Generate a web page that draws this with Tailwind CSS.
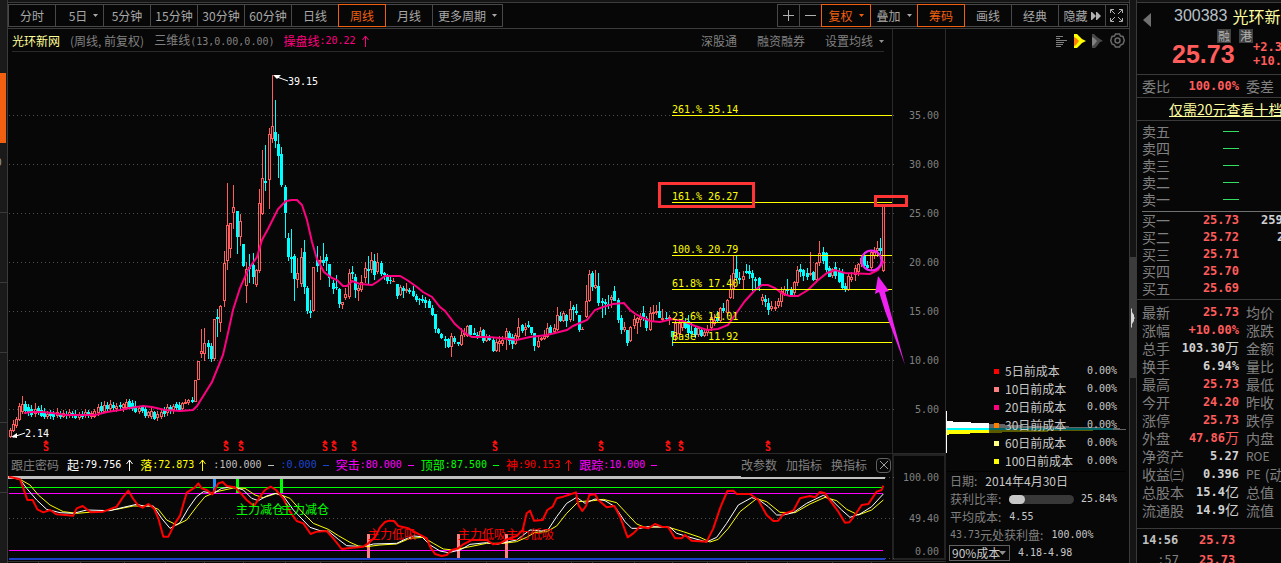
<!DOCTYPE html>
<html lang="zh-CN">
<head>
<meta charset="utf-8">
<title>光环新网 300383</title>
<script src="https://cdn.jsdelivr.net/npm/@tailwindcss/browser@4"></script>
</head>
<body class="flex h-screen overflow-hidden bg-[#070707] font-['Noto_Sans_CJK_SC',sans-serif] text-xs leading-[18px] text-[#a8a8a8]">

<aside class="flex w-2 shrink-0 flex-col border-r border-[#3a3a3a] bg-[#1a1a1a]">
  <div class="h-[73px] shrink-0"></div>
  <div class="h-[70px] w-[6px] shrink-0 bg-[#f06010]"></div>
  <div class="h-[70px] shrink-0 overflow-hidden border-b border-[#3a3a3a] pt-[10px] text-[10px]"><span class="-ml-1">0</span></div>
  <div class="h-[70px] shrink-0 border-b border-[#3a3a3a]"></div>
  <div class="h-[70px] shrink-0 border-b border-[#3a3a3a]"></div>
  <div class="h-[70px] shrink-0 border-b border-[#3a3a3a]"></div>
  <div class="h-[70px] shrink-0 border-b border-[#3a3a3a]"></div>
</aside>

<main class="flex min-w-0 flex-1 flex-col">
  <div class="h-[3px] shrink-0 border-b border-[#3c3c3c] bg-[#151515]"></div>
  <nav class="flex h-[26px] shrink-0 items-center justify-between border-b border-[#3c3c3c]">
    <div class="flex h-[23px] whitespace-nowrap">
      <button class="w-[48px] border border-[#484848]">分时</button>
      <button class="-ml-px flex w-[49px] items-center justify-center gap-[6px] border border-[#484848] pl-2">5日<svg width="5" height="3"><path d="M0 0h5L2.500 3z" fill="#a8a8a8"/></svg></button>
      <button class="-ml-px w-[48px] border border-[#484848]">5分钟</button>
      <button class="-ml-px w-[48px] border border-[#484848]">15分钟</button>
      <button class="-ml-px w-[48px] border border-[#484848]">30分钟</button>
      <button class="-ml-px w-[48px] border border-[#484848]">60分钟</button>
      <button class="-ml-px w-[48px] border border-[#484848]">日线</button>
      <button class="relative z-10 -ml-px w-[48px] border border-[#f06010] text-[#f06010]">周线</button>
      <button class="-ml-px w-[48px] border border-[#484848]">月线</button>
      <button class="-ml-px flex w-[71px] items-center justify-center gap-[6px] border border-[#484848]">更多周期<svg width="5" height="3"><path d="M0 0h5L2.500 3z" fill="#a8a8a8"/></svg></button>
    </div>
    <div class="mr-px flex h-[23px] whitespace-nowrap">
      <button aria-label="放大" class="flex w-[23px] items-center justify-center border border-[#484848]"><svg width="11" height="11" stroke="#b0b0b0"><path d="M0 5.500h11M5.500 0v11"/></svg></button>
      <button aria-label="缩小" class="-ml-px flex w-[23px] items-center justify-center border border-[#484848]"><svg width="11" height="11" stroke="#b0b0b0"><path d="M0 5.500h11"/></svg></button>
      <button class="relative z-10 -ml-px flex w-[50px] items-center justify-center gap-[6px] border border-[#f06010] text-[#f06010]">复权<svg width="5" height="3"><path d="M0 0h5L2.500 3z" fill="#f06010"/></svg></button>
      <button class="-ml-px flex w-[48px] items-center justify-center gap-[6px] border border-[#484848]">叠加<svg width="5" height="3"><path d="M0 0h5L2.500 3z" fill="#a8a8a8"/></svg></button>
      <button class="relative z-10 -ml-px w-[48px] border border-[#f06010] text-[#f06010]">筹码</button>
      <button class="-ml-px w-[48px] border border-[#484848]">画线</button>
      <button class="-ml-px w-[48px] border border-[#484848]">经典</button>
      <button class="-ml-px flex w-[48px] items-center justify-center gap-[3px] border border-[#484848]">隐藏<svg width="10" height="8" fill="#b0b0b0"><path d="M0 0h1l4 4-4 4H0zM5 0h1l4 4-4 4H5z"/></svg></button>
      <button aria-label="全屏" class="-ml-px flex w-[23px] items-center justify-center border border-[#484848]"><svg width="13" height="13" fill="none" stroke="#b0b0b0"><path d="M.5 4V.5H4M9 .5h3.500V4M12.500 9v3.500H9M4 12.500H.5V9M1 1l4 4M12 1L8 5M12 12L8 8M1 12l4-4"/></svg></button>
    </div>
  </nav>

  <div class="flex min-h-0 flex-1">
    <section class="flex min-w-0 flex-1 flex-col">
      <header class="flex h-[23px] shrink-0 whitespace-nowrap text-[#808080]">
        <div class="mr-[8px] ml-[4px] flex min-w-0 flex-1 items-center border-b border-[#2a2a2a] pt-[2px]">
          <h1 class="text-[#ffff99]">光环新网</h1>
          <span class="ml-[10px]">(周线, 前复权)</span>
          <span class="ml-[10px]">三维线<span class="font-['DejaVu_Sans_Mono',monospace] text-[10px]">(13,0.00,0.00)</span></span>
          <span class="ml-[9px] flex items-center text-[#ff0080]">操盘线<span class="mr-[6px] font-['DejaVu_Sans_Mono',monospace] text-[10px]">:20.22</span><svg width="8" height="12" fill="none" stroke="currentColor"><path d="M3.500 12V1M.5 5l3-4 3 4"/></svg></span>
          <div class="ml-auto flex gap-[20px]"><button>深股通</button><button>融资融券</button><button class="flex items-center gap-[6px]">设置均线<svg width="5" height="3"><path d="M0 0h5L2.500 3z" fill="#909090"/></svg></button></div>
        </div>
        <div class="w-[54px] shrink-0 border-x border-[#2a2a2a]"></div>
      </header>

      <svg class="block min-h-0 w-full flex-1 overflow-visible" viewBox="8 52 938 401" preserveAspectRatio="xMinYMin meet" font-family="'DejaVu Sans Mono',monospace" font-size="10" role="img" aria-label="周线图">
        <path d="M892.500 52V453M945.500 52V453" stroke="#2a2a2a"/>
        <path d="M9 115.500H894M9 164.500H894M9 213.500H894M9 262.500H894M9 311.500H894M9 360.500H894M9 409.500H894" stroke="#505050" stroke-dasharray="1 3"/>
        <g fill="#808080"><text x="909" y="119">35.00</text><text x="909" y="168">30.00</text><text x="909" y="217">25.00</text><text x="909" y="266">20.00</text><text x="909" y="315">15.00</text><text x="909" y="364">10.00</text><text x="915" y="413">5.00</text></g>
        <g id="candles" shape-rendering="crispEdges"></g>
        <polyline fill="none" stroke="#ff0080" stroke-width="2" points="24,413 32,412 42,412 52,413 66,415 80,415 95,415 107,412 120,410 130,408 143,406 152,407 165,410 180,411 193,410 197,406 202,398 212,382 223,355 228,333 233,310 240,288 248,270 257,257 262,240 268,229 278,209 286,201 292,200 297,200 302,205 307,220 312,242 317,259 324,272 332,278 337,280 343,286 347,286 352,281 360,284 372,285 377,282 385,276 400,276 407,280 417,287 423,292 432,297 440,307 445,311 455,324 465,333 472,337 488,337 500,338 517,340 530,337 547,335 567,330 573,326 587,320 595,310 603,307 613,304 624,303 630,310 637,315 650,321 660,322 672,319 683,321 695,326 707,330 718,329 728,325 735,315 745,301 755,290 762,285 768,285 775,288 783,294 790,296 798,296 808,290 817,281 827,273 835,270 845,273 870,274 878,270 884,261"/>
        <path d="M672 115.500H892M672 202.500H892M672 255.500H892M672 289.500H892M672 322.500H892M672 342.500H892" stroke="#ff0"/>
        <g fill="#ff0" style="white-space:pre"><text x="672" y="113">261.% 35.14</text><text x="672" y="200">161.% 26.27</text><text x="672" y="253">100.% 20.79</text><text x="672" y="287">61.8% 17.40</text><text x="672" y="320">23.6% 14.01</text><text x="672" y="340" xml:space="preserve">Base&#160; 11.92</text></g>
        <g fill="#fff"><path d="M273 75h8l-4 4z"/><path d="M277 77l11 4" stroke="#fff"/><text x="288" y="85">39.15</text>
        <path d="M11 437l6-4v5z"/><path d="M13 437l12-4" stroke="#fff"/><text x="25" y="437">2.14</text></g>
        <g fill="none" stroke="#ff3535" stroke-width="3"><rect x="659.500" y="183.500" width="94" height="23"/><rect x="875.500" y="196.500" width="31" height="9"/></g>
        <circle cx="871.500" cy="260.500" r="10" fill="none" stroke="#f020f0" stroke-width="2"/>
        <path d="M878 276l11 15-4 1 20 73-20-54-6-19-4 2z" fill="#f020f0"/>
        <g id="marks" fill="#ff1010" font-weight="bold" text-anchor="middle"></g>
      </svg>

      <header class="flex h-[23px] shrink-0 whitespace-nowrap border-t border-[#2a2a2a]">
        <div class="flex min-w-0 flex-1 items-center pl-[3px]">
          <span class="mr-[8px] text-[#808080]">跟庄密码</span>
          <div class="flex gap-[6px]">
            <span class="flex items-center text-white">起<span class="mr-[5px] font-['DejaVu_Sans_Mono',monospace] text-[10px]">:79.756</span><svg width="8" height="12" fill="none" stroke="currentColor"><path d="M3.500 12V1M.5 5l3-4 3 4"/></svg></span>
            <span class="flex items-center text-[#ffff00]">落<span class="mr-[5px] font-['DejaVu_Sans_Mono',monospace] text-[10px]">:72.873</span><svg width="8" height="12" fill="none" stroke="currentColor"><path d="M3.500 12V1M.5 5l3-4 3 4"/></svg></span>
            <span class="flex items-center text-[#c0c0c0]"><span class="mr-[5px] font-['DejaVu_Sans_Mono',monospace] text-[10px]">:100.000</span><svg width="8" height="12" stroke="currentColor"><path d="M1 6.500h6"/></svg></span>
            <span class="flex items-center text-[#1a45d0]"><span class="mr-[5px] font-['DejaVu_Sans_Mono',monospace] text-[10px]">:0.000</span><svg width="8" height="12" stroke="currentColor"><path d="M1 6.500h6"/></svg></span>
            <span class="flex items-center text-[#ff00ff]">突击<span class="mr-[5px] font-['DejaVu_Sans_Mono',monospace] text-[10px]">:80.000</span><svg width="8" height="12" stroke="currentColor"><path d="M1 6.500h6"/></svg></span>
            <span class="flex items-center text-[#00ff00]">顶部<span class="mr-[5px] font-['DejaVu_Sans_Mono',monospace] text-[10px]">:87.500</span><svg width="8" height="12" stroke="currentColor"><path d="M1 6.500h6"/></svg></span>
            <span class="flex items-center text-[#ff0000]">神<span class="mr-[5px] font-['DejaVu_Sans_Mono',monospace] text-[10px]">:90.153</span><svg width="8" height="12" fill="none" stroke="currentColor"><path d="M3.500 12V1M.5 5l3-4 3 4"/></svg></span>
            <span class="flex items-center text-[#ff00ff]">跟踪<span class="mr-[5px] font-['DejaVu_Sans_Mono',monospace] text-[10px]">:10.000</span><svg width="8" height="12" stroke="currentColor"><path d="M1 6.500h6"/></svg></span>
          </div>
          <div class="mr-px ml-auto flex items-center gap-[9px] text-[#808080]"><button>改参数</button><button>加指标</button><button>换指标</button><button aria-label="关闭" class="flex h-[15px] w-[15px] items-center justify-center rounded-sm border border-[#606060]"><svg width="8" height="8" stroke="#a0a0a0"><path d="M0 0l8 8M8 0L0 8"/></svg></button></div>
        </div>
        <div class="w-[54px] shrink-0 border-x-2 border-t-2 border-[#222]"></div>
      </header>

      <svg class="block h-[87px] w-full shrink-0 overflow-visible" viewBox="8 476 938 87" preserveAspectRatio="xMinYMin meet" role="img" aria-label="跟庄密码指标">
        <path d="M893 476V559H945V476" fill="none" stroke="#222" stroke-width="2"/>
        <path d="M8 561.500H946M38.500 561v2M80.500 561v2M124.500 561v2M165.500 561v2M204.500 561v2M243.500 561v2M285.500 561v2M320.500 561v2M361.500 561v2M406.500 561v2M445.500 561v2M486.500 561v2M528.500 561v2M571.500 561v2M592.500 561v2M634.500 561v2M672.500 561v2M707.500 561v2M746.500 561v2M787.500 561v2M832.500 561v2M871.500 561v2" stroke="#333"/>
        <path d="M9 518.500H894M885 477.500H894M885 558.500H894" stroke="#505050" stroke-dasharray="1 3"/>
        <path d="M8 476H741V477H885V479H8z" fill="#c0c0c0"/>
        <path d="M9 487.500H883" stroke="#0f0"/>
        <path d="M9 493.500H883M9 550.500H883" stroke="#f0f"/>
        <path d="M9 559H885" stroke="#1a40c8" stroke-width="2"/>
        <path d="M213 479h3v14h-3z" fill="#2090ff"/>
        <path d="M236 479h3v14h-3zM280 479h3v14h-3z" fill="#0f0"/>
        <path d="M367 534h3v24h-3zM457 534h3v24h-3zM505 534h3v24h-3z" fill="#ff8080"/>
        <g fill="none" stroke="#ff0" stroke-width="3">
          <polyline transform="translate(0 450) scale(.33333)" points="27,80 60,88 90,105 115,135 150,165 190,185 230,190 290,185 350,178 400,168 450,168 475,178 500,210 530,225 560,210 590,170 615,140 650,125 700,114 735,115 765,135 790,143 830,130 870,145 910,190 940,220 985,238 1015,257 1050,277 1075,288 1100,290 1140,285 1190,282 1230,265 1270,262 1300,280 1330,297 1360,300 1410,290 1460,280 1510,280 1550,275 1580,262 1605,247 1640,245 1670,228 1700,190 1735,155 1780,152 1810,148 1850,158 1880,190 1910,222 1935,232 2000,230 2050,245 2100,262 2130,276 2155,268 2185,235 2220,185 2270,146 2300,155 2340,187 2385,188 2430,162 2475,142 2510,152 2540,178 2575,195 2615,180 2650,150"/>
        </g>
        <g fill="none" stroke="#fff" stroke-width="3">
          <polyline transform="translate(0 450) scale(.33333)" points="27,82 60,88 80,115 110,150 140,178 180,188 220,190 260,180 330,182 370,172 410,163 430,168 460,168 485,205 510,235 540,218 565,175 590,140 610,125 640,130 665,115 700,110 730,120 755,145 775,152 800,138 825,130 850,138 880,180 930,232 960,242 985,243 1015,268 1040,287 1090,290 1120,282 1190,280 1215,268 1240,258 1265,260 1290,285 1320,303 1345,308 1380,300 1410,283 1460,278 1490,283 1550,270 1590,240 1625,243 1645,238 1670,200 1700,160 1730,142 1755,160 1785,147 1815,152 1845,170 1875,215 1895,235 1920,235 1945,230 2010,232 2030,250 2070,262 2120,276 2150,262 2180,220 2215,165 2255,143 2275,148 2305,170 2330,195 2350,195 2380,188 2420,160 2470,136 2495,150 2525,180 2550,202 2580,192 2615,170 2650,132"/>
        </g>
        <g fill="none" stroke="#f00" stroke-width="6" stroke-linejoin="round">
          <polyline transform="translate(0 450) scale(.33333)" points="27,80 60,88 70,115 82,150 98,150 112,178 130,187 150,180 170,193 220,197 230,175 248,168 272,187 310,185 350,170 368,143 385,122 400,147 415,167 428,173 445,162 462,175 475,205 490,260 505,260 525,220 540,197 560,128 585,112 595,100 605,115 620,120 637,133 655,100 668,96 680,108 705,112 720,127 740,150 762,168 780,140 795,120 812,110 828,120 850,145 870,185 890,213 910,220 932,252 950,245 980,243 1000,265 1025,297 1050,294 1090,290 1105,280 1125,262 1140,232 1155,216 1168,212 1182,213 1195,228 1225,235 1252,250 1280,265 1290,290 1305,312 1325,318 1340,315 1355,300 1375,295 1390,283 1415,270 1460,270 1480,283 1500,280 1520,268 1550,258 1568,240 1580,190 1590,182 1602,212 1628,210 1642,180 1658,170 1670,145 1690,140 1705,135 1728,127 1735,165 1747,183 1758,168 1768,135 1785,133 1795,150 1820,172 1843,168 1860,200 1883,262 1900,250 1920,230 1945,235 1965,222 1985,230 2005,232 2025,265 2045,265 2055,255 2075,272 2120,275 2140,235 2160,175 2182,123 2200,122 2210,132 2250,132 2275,150 2300,195 2320,213 2335,212 2350,192 2380,182 2400,145 2430,138 2445,142 2460,126 2475,130 2495,158 2515,185 2535,218 2548,217 2565,195 2585,165 2605,162 2630,125 2645,120 2650,107"/>
        </g>
        <g font-size="12" font-family="'Noto Sans CJK SC',sans-serif"><g fill="#0f0"><text x="236" y="514">主力减仓</text><text x="281" y="514">主力减仓</text></g><g fill="#f00"><text x="368" y="539">主力低吸</text><text x="458" y="539">主力低吸</text><text x="506" y="539">主力低吸</text></g></g>
        <g fill="#808080" font-family="'DejaVu Sans Mono',monospace" font-size="10"><text x="903" y="481">100.00</text><text x="909" y="522">49.40</text><text x="915" y="555">0.00</text></g>
      </svg>
    </section>

    <section class="relative flex w-[183px] shrink-0 flex-col whitespace-nowrap text-[#c8c8c8]">
      <div class="flex h-[23px] shrink-0 items-center justify-end gap-[5px] pr-[4px]">
        <button aria-label="列表"><svg width="13" height="12" stroke="#808080"><path d="M0 1.500h7M0 3.500h4M0 5.500h11M0 7.500h8M0 9.500h7M0 11.500h5"/></svg></button>
        <button aria-label="当前筹码"><svg width="13" height="14"><path d="M0 0h3l3 3 2 2 4 2-4 2-3 3-2 2H0z" fill="#ff0"/><path d="M0 3l2 1 3 3-3 4-2 1z" fill="#ff8000"/></svg></button>
        <button aria-label="历史筹码"><svg width="13" height="14"><path d="M0 0h2l3 3 3 2 3 2-3 1-3 4-2 2H0z" fill="#484848"/><path d="M0 3l2 1 3 3-3 4-2 1z" fill="#808080"/></svg></button>
        <button aria-label="设置"><svg width="15" height="15" fill="none" stroke="#686868" stroke-width="1.500"><path d="M5.500 1h4l1 2 2.500.5L14.300 7.500 13 11l-2.500 1-1 2h-4l-1-2L2 11 .7 7.500 2 3.500 4.500 3z"/><circle cx="7.500" cy="7.500" r="2.500"/></svg></button>
      </div>
      <svg class="absolute top-[382px] left-0" width="180" height="42" viewBox="946 411 180 42" shape-rendering="crispEdges">
        <path d="M989 424H1005V425H1023V426H1069V427H1100V428H1120V429H1126V430H989z" fill="#666"/>
        <path d="M989 430H1093V431H1048V432H1002V433H989z" fill="#5a5a00"/>
        <path d="M989 428H1113V430H989z" fill="#006868"/>
        <path d="M946 411h1V421H953V422H971V423H989V430H947V453H946z" fill="#fff"/>
        <path d="M947 430H989V433H970V434H949V435H947z" fill="#ff0"/>
        <path d="M947 428H989V430H947z" fill="#0ff"/>
      </svg>
      <ul class="relative mt-auto pr-[12px] pl-[48px]">
        <li class="flex h-[18px] items-center"><i class="mr-[6px] h-[5px] w-[5px] bg-[#ff0000]"></i>5日前成本<span class="ml-auto font-['DejaVu_Sans_Mono',monospace] text-[10px]">0.00%</span></li>
        <li class="flex h-[18px] items-center"><i class="mr-[6px] h-[5px] w-[5px] bg-[#ff8080]"></i>10日前成本<span class="ml-auto font-['DejaVu_Sans_Mono',monospace] text-[10px]">0.00%</span></li>
        <li class="flex h-[18px] items-center"><i class="mr-[6px] h-[5px] w-[5px] bg-[#ff0080]"></i>20日前成本<span class="ml-auto font-['DejaVu_Sans_Mono',monospace] text-[10px]">0.00%</span></li>
        <li class="flex h-[18px] items-center"><i class="mr-[6px] h-[5px] w-[5px] bg-[#ff8000]"></i>30日前成本<span class="ml-auto font-['DejaVu_Sans_Mono',monospace] text-[10px]">0.00%</span></li>
        <li class="flex h-[18px] items-center"><i class="mr-[6px] h-[5px] w-[5px] bg-[#ffff80]"></i>60日前成本<span class="ml-auto font-['DejaVu_Sans_Mono',monospace] text-[10px]">0.00%</span></li>
        <li class="flex h-[18px] items-center"><i class="mr-[6px] h-[5px] w-[5px] bg-[#ffff00]"></i>100日前成本<span class="ml-auto font-['DejaVu_Sans_Mono',monospace] text-[10px]">0.00%</span></li>
      </ul>
      <div class="mt-px mr-[3px] border-t border-black pr-[9px] pb-px pl-[4px]">
        <p class="flex h-[18px] items-center"><span class="mr-[8px] text-[#808080]">日期:</span>2014年4月30日</p>
        <p class="flex h-[18px] items-center"><span class="mr-[8px] text-[#808080]">获利比率:</span><span class="h-[9px] w-[65px] rounded-full bg-[#383838]"><span class="block h-[9px] w-[16px] rounded-full bg-[#c8c8c8]"></span></span><span class="ml-auto font-['DejaVu_Sans_Mono',monospace] text-[10px]">25.84%</span></p>
        <p class="flex h-[18px] items-center"><span class="mr-[8px] text-[#808080]">平均成本:</span><span class="font-['DejaVu_Sans_Mono',monospace] text-[10px]">4.55</span></p>
        <p class="flex h-[18px] items-center"><span class="text-[#808080] font-['DejaVu_Sans_Mono',monospace] text-[10px]">43.73</span><span class="mr-[8px] text-[#808080]">元处获利盘:</span><span class="font-['DejaVu_Sans_Mono',monospace] text-[10px]">100.00%</span></p>
        <p class="flex h-[18px] items-center"><span class="relative mr-[8px] -ml-px flex items-center"><select aria-label="成本区间" class="h-4 w-[61px] appearance-none border border-[#606060] bg-[#070707] pl-[2px] text-xs leading-[14px]"><option>90%成本</option><option>70%成本</option></select><svg class="pointer-events-none absolute right-1" width="7" height="4"><path d="M0 0h7L3.500 4z" fill="#909090"/></svg></span><span class="font-['DejaVu_Sans_Mono',monospace] text-[10px]">4.18-4.98</span></p>
      </div>
    </section>
  </div>
</main>

<div class="flex w-[8px] shrink-0 flex-col border-x border-[#3a3a3a] bg-[#151515]">
  <div class="h-[257px] shrink-0"></div>
  <div class="flex h-[121px] shrink-0 items-center justify-center bg-[#3c3c3c]"><svg width="5" height="20"><path d="M0 0l1 1v3l2 3v2l1 1-1 1v2l-2 3v3l-1 1z" fill="#d8d8d8"/></svg></div>
</div>

<aside class="w-[144px] shrink-0 overflow-hidden whitespace-nowrap text-sm text-[#808080]">
  <div class="h-[3px] border-b border-[#3c3c3c] bg-[#151515]"></div>
  <div class="flex h-[25px] items-center">
    <button aria-label="上一只" class="mr-[23px] ml-[6px] pt-[8px]"><svg width="8" height="14"><path d="M8 0v14L0 7z" fill="#707070"/></svg></button>
    <span class="mr-[5px] font-['Liberation_Sans',sans-serif] text-base text-[#b8c0c8]">300383</span><span class="text-base text-[#ffffa0]">光环新网</span>
  </div>
  <div class="flex h-[47px] border-b border-[#3a3a3a]">
    <div class="ml-[35px] w-[64px] shrink-0">
      <div class="-mr-[17px] flex justify-end gap-2 pt-px text-xs leading-[14px] text-[#b0b0b0]"><span class="w-[14px] bg-[#404040] text-center">融</span><span class="w-[14px] bg-[#404040] text-center">港</span></div>
      <div class="font-['Liberation_Sans',sans-serif] text-[25px] leading-[22px] font-bold text-[#ff5c5c]">25.73</div>
    </div>
    <div class="ml-[17px] pt-[12px] font-['DejaVu_Sans_Mono',monospace] text-xs leading-[14px] font-bold text-[#ff5c5c]"><div>+2.34</div><div>+10.00%</div></div>
  </div>
  <div class="grid h-[23px] grid-cols-[97px_60px] items-center gap-x-[7px] border-b border-[#3a3a3a] pl-[5px] leading-[18px]"><div class="flex items-center justify-between">委比<b class="font-['DejaVu_Sans_Mono',monospace] text-xs leading-[18px] text-[#ff5c5c]">100.00%</b></div>委差</div>
  <div class="h-[23px] border-b border-[#3a3a3a] pl-[32px] leading-[22px]"><a href="#level2" class="text-[#ffffa0] underline">仅需20元查看十档行情</a></div>
  <div class="ml-[5px] border-b border-[#707070] pt-[2px] pb-[3px] leading-[17px]" id="asks"></div>
  <div class="pl-[5px] leading-[17px]" id="bids"></div>
  <div class="mt-[2px] border-t border-[#3a3a3a] pt-[3px] pb-[9px] pl-[5px] leading-[18px]" id="stats"></div>
  <div class="border-t border-[#3a3a3a] pt-px pl-[5px] font-['DejaVu_Sans_Mono',monospace] text-xs leading-5 font-bold">
    <div class="flex gap-[20px]"><span class="w-[37px] text-[#c0c0c0]">14:56</span><span class="text-[#ff5c5c]">25.73</span></div>
    <div class="flex gap-[20px]"><span class="w-[37px] text-right font-normal">:57</span><span class="text-[#ff5c5c]">25.73</span></div>
  </div>
</aside>

<script>
// Weekly bars: centre x, high, low, body top, body bottom, 1 = rising / 0 = falling
const bars = `10 428 437 430 436 1|13 420 431 424 430 1|16 417 427 419 425 1|19 403 420 406 419 1|22 396 413 404 411 1|25 401 413 404 410 0|28 404 415 407 412 0|31 405 416 409 414 0|35 403 416 409 413 1|38 406 414 408 412 0|41 405 416 410 415 0|44 408 418 413 416 0|47 411 418 414 416 1|50 410 418 413 415 0|53 411 419 413 416 0|57 408 417 412 415 1|60 411 418 414 416 0|63 410 417 413 416 1|66 411 418 414 415 0|69 409 417 412 415 1|72 411 417 413 414 0|75 410 418 414 417 0|79 412 419 415 417 1|82 411 418 414 416 0|85 409 417 412 415 1|88 410 417 412 415 0|91 411 418 413 416 1|94 409 417 411 416 1|98 404 415 407 412 1|101 402 412 406 410 0|104 401 412 405 411 1|107 402 411 405 408 0|110 400 410 404 408 1|113 402 410 405 407 0|116 403 411 406 408 1|120 402 410 405 406 0|123 403 411 404 407 1|126 399 409 402 407 1|129 399 408 401 406 0|132 400 410 403 408 0|135 401 412 406 411 0|139 406 413 408 411 1|142 405 412 407 410 0|145 407 417 409 415 0|148 411 417 412 415 1|151 408 418 411 416 1|154 411 419 412 418 0|157 411 420 414 417 1|161 409 418 412 416 1|164 407 416 410 413 0|167 404 415 407 412 1|170 405 413 407 410 0|173 404 413 406 409 1|176 402 410 404 407 0|179 402 411 405 409 0|182 402 409 403 408 1|185 399 403 402 403 1|188 399 404 400 402 1|192 397 402 400 401 0|195 380 401 380 401 1|198 361 379 361 379 1|201 329 357 351 353 1|204 328 360 343 353 1|208 340 358 343 346 0|211 343 361 346 358 0|214 319 360 319 358 1|217 309 336 317 318 0|220 305 331 306 322 1|224 251 306 263 300 1|227 183 269 225 260 1|230 223 257 223 248 1|233 185 228 207 212 1|237 211 253 211 236 0|240 214 245 221 236 1|243 244 266 244 265 0|246 262 302 269 285 1|249 254 282 267 268 0|253 253 283 265 276 0|256 269 286 270 284 1|259 189 272 203 270 1|262 150 214 178 213 1|265 145 190 181 182 0|269 128 208 134 179 1|272 75 142 126 138 1|275 100 147 132 140 0|278 134 177 144 155 0|281 147 186 154 184 0|285 185 237 187 212 0|288 233 260 238 256 0|291 229 272 257 258 0|294 254 300 256 278 0|297 258 287 273 279 1|301 248 286 257 283 1|304 240 293 252 286 0|307 286 313 288 310 0|310 300 317 311 312 0|313 267 311 267 310 1|317 246 271 260 265 0|320 256 279 260 261 1|323 243 265 260 262 0|326 254 270 257 260 0|329 264 286 264 277 0|333 280 293 283 288 0|336 275 289 287 287 0|339 288 307 289 303 0|342 302 308 302 304 1|345 288 299 294 297 1|349 269 298 273 296 1|352 266 278 272 273 0|355 274 297 277 289 0|358 285 300 288 290 1|361 275 291 282 289 1|365 262 282 268 277 1|368 256 284 269 270 0|371 252 272 260 269 1|374 254 279 261 274 0|377 253 273 262 271 1|381 261 275 263 273 0|384 272 279 273 274 0|387 274 283 277 280 0|390 276 283 280 280 0|393 278 281 281 281 1|397 284 298 284 295 0|400 285 295 287 294 1|403 286 297 288 290 0|406 283 292 289 290 1|409 288 293 290 291 0|413 286 296 291 295 0|416 294 301 296 299 0|419 298 304 299 299 0|422 295 302 299 300 0|425 297 307 300 302 0|429 299 307 301 307 0|432 305 315 308 314 0|435 314 332 314 328 0|438 328 333 329 332 0|441 333 338 334 337 0|445 336 347 339 340 0|448 338 347 339 346 0|451 333 356 336 346 1|454 336 343 338 341 0|458 342 345 342 343 0|461 328 345 335 344 1|464 328 336 333 334 1|467 325 336 326 335 1|470 325 336 325 334 0|474 328 334 333 334 0|477 332 338 335 336 0|480 327 337 331 336 1|483 329 342 330 340 0|486 334 341 337 340 1|489 335 340 337 339 0|493 337 351 340 350 0|496 339 351 342 350 1|499 336 351 341 343 1|502 336 345 340 343 1|506 328 349 331 337 1|509 331 344 333 340 0|512 334 348 337 343 0|515 333 344 335 343 1|518 318 339 327 336 1|522 324 332 325 330 0|525 323 335 327 329 1|528 321 327 325 326 0|531 327 334 327 332 0|534 333 350 333 345 0|538 336 347 341 346 1|541 337 340 338 339 1|544 330 339 336 338 1|547 323 337 328 336 1|550 325 333 327 332 0|554 324 333 328 331 1|557 307 330 315 329 1|560 312 321 316 320 0|563 311 321 313 320 1|566 314 326 315 320 0|570 301 321 309 319 1|573 305 320 307 309 0|576 304 314 311 312 0|579 315 331 315 329 0|582 327 329 329 329 1|586 285 317 301 316 1|589 270 301 274 300 1|592 271 290 273 286 0|595 270 288 285 287 1|598 273 305 286 302 0|602 298 317 301 302 0|605 299 314 302 303 0|608 295 308 304 305 0|611 295 307 297 299 1|614 286 300 291 300 0|618 298 322 300 319 0|621 315 333 318 329 0|624 322 331 327 329 1|627 330 345 330 342 0|630 326 341 327 340 1|634 315 328 319 325 1|637 317 333 318 322 1|640 313 326 317 319 1|643 306 320 313 316 0|646 316 330 318 327 0|650 307 330 313 329 1|653 305 320 312 313 1|656 305 314 311 312 1|659 302 317 311 317 0|662 309 321 318 319 1|666 312 319 318 318 0|669 315 324 317 318 1|672 331 345 331 336 0|675 320 340 323 336 1|679 321 336 323 333 1|682 320 330 322 327 1|685 318 328 322 327 0|688 315 336 321 332 0|691 323 334 331 333 0|695 327 337 328 334 0|698 326 336 328 334 1|701 329 336 330 335 0|704 329 336 332 335 1|707 325 335 330 332 1|711 314 330 317 327 1|714 314 325 320 323 1|717 311 322 318 320 0|720 307 322 308 320 1|723 303 312 308 310 0|727 299 315 300 312 1|730 275 298 289 297 1|733 256 298 273 288 1|736 256 280 269 277 0|739 272 283 278 279 0|743 271 288 276 279 1|746 264 273 271 272 0|749 265 278 271 273 0|752 270 290 273 277 0|755 277 290 279 280 0|759 277 290 278 286 0|762 294 304 297 300 1|765 295 306 299 301 0|768 298 314 303 309 0|771 301 310 306 308 1|775 301 310 307 308 1|778 298 307 301 305 1|781 287 306 291 301 1|784 286 295 289 293 1|787 279 294 289 290 0|791 287 295 290 294 0|794 281 295 282 292 1|797 266 285 270 282 1|800 264 276 269 271 0|803 269 280 270 275 0|807 268 279 273 276 0|810 252 275 273 274 1|813 271 280 272 279 0|816 262 282 263 279 1|819 241 265 253 262 1|823 247 263 252 260 0|826 252 271 253 269 0|829 266 276 268 276 0|832 268 277 269 275 1|835 262 278 267 275 0|839 268 282 272 281 0|842 269 289 273 287 0|845 283 291 286 289 0|848 274 290 276 289 1|851 272 281 277 279 1|855 265 280 268 274 1|858 263 275 264 271 1|861 256 266 258 263 1|864 252 267 256 265 0|867 261 269 265 267 0|871 251 270 252 267 1|874 247 258 252 255 1|877 241 256 248 250 1|880 238 254 248 250 0|883 206 271 206 270 1`;
document.getElementById('candles').innerHTML = bars.split('|').map(s => {
  const [x, h, l, t, b, up] = s.split(' ').map(Number);
  const c = up ? '#ff5c5c' : '#00ffff';
  const wick = `<rect x="${x}" y="${h}" width="1" height="${l - h + 1}" fill="${c}"/>`;
  const body = `<rect x="${x - 1}" y="${t}" width="3" height="${b - t + 1}" fill="${c}"/>`;
  const hollow = up && b - t > 1 ? `<rect x="${x}" y="${t + 1}" width="1" height="${b - t - 1}" fill="#070707"/>` : '';
  return wick + body + hollow;
}).join('');
document.getElementById('marks').innerHTML = [46, 226, 241, 325, 334, 354, 495, 601, 668, 681, 768]
  .map(x => `<text x="${x}" y="451">S</text><path d="M${x - 3} 443l3-3 3 3z"/>`).join('');

const num = "font-['DejaVu_Sans_Mono',monospace] text-xs leading-[17px]";
const row = (label, value, next, red) => `<div class="grid grid-cols-[97px_60px] gap-x-[7px]"><div class="flex items-center justify-between">${label}<b class="${num} ${red ? 'text-[#ff5c5c]' : 'text-[#d0d0d0]'}">${value.replace(/[万亿]/, '<span class="align-top text-sm leading-[17px] font-normal">$&</span>')}</b></div>${next}</div>`;
document.getElementById('asks').innerHTML = ['五', '四', '三', '二', '一']
  .map(n => `<div class="flex w-[97px] items-center justify-between">卖${n}<span class="h-px w-4 bg-[#30e060]"></span></div>`).join('');
document.getElementById('bids').innerHTML = [['一', '25.73', '259'], ['二', '25.72', '2'], ['三', '25.71', ''], ['四', '25.70', ''], ['五', '25.69', '']]
  .map(([n, p, v]) => row('买' + n, p, `<b class="${num} pl-[15px] text-[#d0d0d0]">${v === '2' ? '<span class="pl-[16px]">2</span>' : v}</b>`, true)).join('');
document.getElementById('stats').innerHTML = [
  ['最新', '25.73', '均价', 1], ['涨幅', '+10.00%', '涨跌', 1], ['总手', '103.30万', '金额', 0], ['换手', '6.94%', '量比', 0],
  ['最高', '25.73', '最低', 1], ['今开', '24.20', '昨收', 1], ['涨停', '25.73', '跌停', 1], ['外盘', '47.86万', '内盘', 1],
  ['净资产', '5.27', '<span class="font-[\'Liberation_Serif\',serif] text-xs leading-[18px]">ROE</span>', 0], ['收益㈢', '0.396', '<span class="flex h-[18px] gap-1"><span class="font-[\'Liberation_Serif\',serif] text-xs leading-[18px]">PE</span>(动)</span>', 0],
  ['总股本', '15.4亿', '总值', 0], ['流通股', '14.9亿', '流值', 0]
].map(r => row(...r)).join('');
</script>
</body>
</html>
